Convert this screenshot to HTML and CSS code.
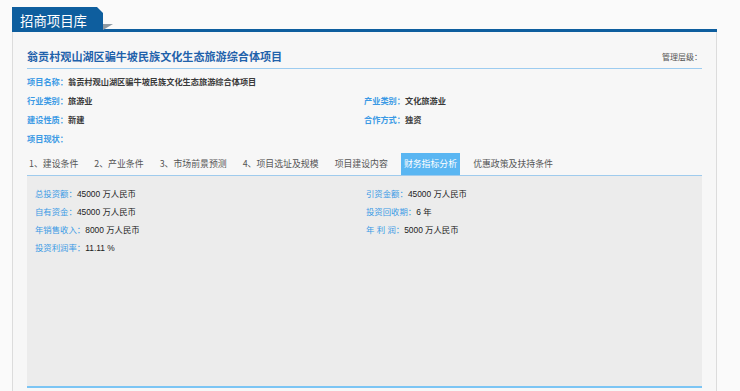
FILE: index.html
```html
<!DOCTYPE html>
<html lang="zh-CN">
<head>
<meta charset="utf-8">
<title>招商项目库</title>
<link rel="stylesheet" href="styles.css">
</head>
<body>
<div class="page">
  <div class="head">
    <div class="head-tab">招商项目库</div>
  </div>
  <div class="panel">
    <div class="title-row">
      <h1 class="title">翁贡村观山湖区骗牛坡民族文化生态旅游综合体项目</h1>
      <span class="level">管理层级：</span>
    </div>
    <div class="info">
      <div class="info-item full"><span class="lbl">项目名称：</span><span class="val">翁贡村观山湖区骗牛坡民族文化生态旅游综合体项目</span></div>
      <div class="info-item"><span class="lbl">行业类别：</span><span class="val">旅游业</span></div>
      <div class="info-item"><span class="lbl">产业类别：</span><span class="val">文化旅游业</span></div>
      <div class="info-item"><span class="lbl">建设性质：</span><span class="val">新建</span></div>
      <div class="info-item"><span class="lbl">合作方式：</span><span class="val">独资</span></div>
      <div class="info-item full"><span class="lbl">项目现状：</span><span class="val"></span></div>
    </div>
    <ul class="tabs">
      <li class="tab first">1、建设条件</li>
      <li class="tab">2、产业条件</li>
      <li class="tab">3、市场前景预测</li>
      <li class="tab">4、项目选址及规模</li>
      <li class="tab">项目建设内容</li>
      <li class="tab active">财务指标分析</li>
      <li class="tab">优惠政策及扶持条件</li>
    </ul>
    <div class="tab-body">
      <div class="data">
        <div class="data-item"><span class="lbl">总投资额：</span><span class="val">45000 万人民币</span></div>
        <div class="data-item"><span class="lbl">引资金额：</span><span class="val">45000 万人民币</span></div>
        <div class="data-item"><span class="lbl">自有资金：</span><span class="val">45000 万人民币</span></div>
        <div class="data-item"><span class="lbl">投资回收期：</span><span class="val">6 年</span></div>
        <div class="data-item"><span class="lbl">年销售收入：</span><span class="val">8000 万人民币</span></div>
        <div class="data-item"><span class="lbl">年 利 润：</span><span class="val">5000 万人民币</span></div>
        <div class="data-item"><span class="lbl">投资利润率：</span><span class="val">11.11 %</span></div>
      </div>
    </div>
  </div>
</div>
</body>
</html>
```

FILE: styles.css
```css
html, body {
  margin: 0;
  padding: 0;
  background: #fafafa;
  font-family: "Liberation Sans", "Noto Sans CJK SC", sans-serif;
  overflow: hidden;
}
.page {
  margin-left: 12px;
  width: 705px;
  padding-top: 7px;
}
.head {
  height: 22px;
  border-bottom: 3px solid #0e5e9e;
  position: relative;
}
.head-tab {
  position: relative;
  width: 83px;
  height: 25px;
  padding-left: 8px;
  background: #0e5e9e;
  color: #fff;
  font-family: "Noto Sans CJK SC", sans-serif;
  font-size: 13.4px;
  line-height: 26px;
  clip-path: polygon(0 0, 85px 0, 100% 6px, 100% 100%, 0 100%);
}
.head::after {
  content: "";
  position: absolute;
  left: 91px;
  top: 17px;
  width: 0;
  height: 0;
  border-top: 6px solid #8f9aa3;
  border-right: 10px solid transparent;
}
.panel {
  border-left: 1px solid #dcdcdc;
  border-right: 1px solid #dcdcdc;
  background: #f7f7f7;
  padding: 0 14px 20px 14px;
}
.title-row {
  display: flex;
  justify-content: space-between;
  align-items: center;
  padding-top: 14px;
  padding-bottom: 2px;
  height: 20px;
  border-bottom: 1px solid #9dccf0;
}
.title {
  margin: 0;
  font-family: "Noto Sans CJK SC", sans-serif;
  font-size: 11.1px;
  font-weight: bold;
  color: #1f62ab;
  line-height: 20px;
}
.level {
  font-family: "Noto Sans CJK SC", sans-serif;
  font-size: 8px;
  color: #555;
}
.info {
  display: grid;
  grid-template-columns: 337px 1fr;
  margin-top: 3px;
}
.info-item {
  line-height: 19px;
  height: 19px;
  font-size: 8.2px;
  font-family: "Noto Sans CJK SC", sans-serif;
  font-weight: bold;
}
.info-item.full {
  grid-column: 1 / -1;
}
.lbl {
  color: #3b9ae5;
}
.val {
  color: #333;
}
.info .val {
  color: #3a3a3a;
}
.tabs {
  display: flex;
  list-style: none;
  margin: 5px 0 0 0;
  padding: 0;
  border-bottom: 1px solid #9fcbed;
  height: 22px;
}
.tab {
  font-family: "Noto Sans CJK SC", sans-serif;
  font-size: 8.9px;
  line-height: 22px;
  color: #555;
  padding: 0 8px;
}
.tab.first {
  padding-left: 2px;
}
.tab.active {
  background: #5ab6f2;
  color: #fff;
  padding: 0 3px;
  margin: 0 5px;
}
.tab-body {
  background: #ececec;
  height: 212px;
  border-bottom: 2px solid #7cc5f4;
  padding: 9px 8px 0 8px;
  box-sizing: border-box;
}
.data {
  display: grid;
  grid-template-columns: 331px 1fr;
}
.data-item {
  font-family: "Liberation Sans", "Noto Sans CJK SC", sans-serif;
  font-size: 8.4px;
  line-height: 18px;
  height: 18px;
}
.data .val {
  color: #222;
}
```
